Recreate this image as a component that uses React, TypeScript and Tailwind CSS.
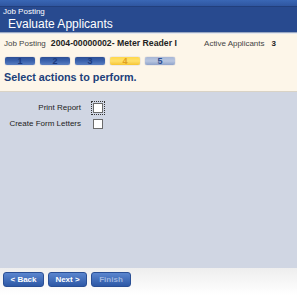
const steps = [
    { n: "1", kind: "done" },
    { n: "2", kind: "done" },
    { n: "3", kind: "done" },
    { n: "4", kind: "active" },
    { n: "5", kind: "todo" },
]

const tabClass: Record<string, string> = {
    done: "bg-gradient-to-b from-[#2d4f94] via-[#3a62ad] to-[#5a7fc2] text-[#1c3a7c]",
    active: "bg-gradient-to-b from-[#ffd84a] via-[#ffe06a] to-[#f6c52e] text-[#e0a020]",
    todo: "bg-gradient-to-b from-[#a7b6d6] via-[#b9c6e0] to-[#8ea2ca] text-[#2d4d8f]",
}

const App = () => {
    return (
        <div className="w-[297px] h-[295px] flex flex-col bg-white font-['Liberation_Sans',Arial,sans-serif] overflow-hidden">
            {/* Header */}
            <div className="h-[32px] bg-[#284a8f] relative text-white">
                <div className="absolute inset-x-0 top-0 h-[7px] bg-gradient-to-b from-[#3a67b5] to-[#2f56a0] border-b border-[#223f7c]" />
                <div className="relative px-[3px] pt-[7px]">
                    <p className="text-[8px] leading-[9px]">Job Posting</p>
                    <p className="text-[12px] leading-[14px] pl-[5px] pt-[1px]">Evaluate Applicants</p>
                </div>
            </div>
            <div className="h-[2px] bg-[#e4e8ef] border-t border-[#9aa8c2]" />

            {/* Summary */}
            <div className="bg-[#fdf6e9] border-b border-[#d9d3c6]">
                <div className="flex items-center h-[20px] pl-[4px] text-[8px] text-[#222]">
                    <span className="text-[#444]">Job Posting</span>
                    <span className="ml-[5px] text-[8.7px] font-bold">2004-00000002- Meter Reader I</span>
                    <span className="ml-auto text-[#444]">Active Applicants</span>
                    <span className="ml-[7px] mr-[21px] font-bold">3</span>
                </div>
                <div className="flex gap-[5px] px-[5px] pt-[3px]">
                    {steps.map((s) => (
                        <div
                            key={s.n}
                            className={`w-[30px] h-[8px] rounded-[2px] text-[9px] leading-[8px] font-bold text-center shadow-[0_0_1px_#6d7fa6] ${tabClass[s.kind]}`}
                        >
                            {s.n}
                        </div>
                    ))}
                </div>
                <p className="px-[4px] pt-[5px] pb-[7px] text-[10.8px] leading-[14px] font-bold text-[#203f7a]">
                    Select actions to perform.
                </p>
            </div>

            {/* Options */}
            <div className="flex-1 bg-[#d0d6e3] pt-[11px]">
                <div className="grid grid-cols-[81px_auto] gap-x-[12px] gap-y-[6px] items-center text-[8px] leading-[10px] text-[#222]">
                    <span className="text-right">Print Report</span>
                    <span className="w-[10px] h-[10px] bg-white border border-[#6b6b6b] outline-dotted outline-1 outline-[#333] outline-offset-[1px]" />
                    <span className="text-right">Create Form Letters</span>
                    <span className="w-[10px] h-[10px] bg-white border border-[#6b6b6b]" />
                </div>
            </div>

            {/* Footer */}
            <div className="h-[27px] bg-gradient-to-b from-[#eeeeee] to-white flex items-start gap-[4px] px-[3px] pt-[4px]">
                <button className="h-[15px] w-[41px] rounded-[3px] bg-gradient-to-b from-[#5b86cf] to-[#2d58a6] border border-[#2a4f95] text-white text-[8px] font-bold">&lt; Back</button>
                <button className="h-[15px] w-[39px] rounded-[3px] bg-gradient-to-b from-[#5b86cf] to-[#2d58a6] border border-[#2a4f95] text-white text-[8px] font-bold">Next &gt;</button>
                <button className="h-[15px] w-[40px] rounded-[3px] bg-gradient-to-b from-[#5b86cf] to-[#2d58a6] border border-[#2a4f95] text-[#9fb6df] text-[8px] font-bold">Finish</button>
            </div>
        </div>
    )
}

export default App
